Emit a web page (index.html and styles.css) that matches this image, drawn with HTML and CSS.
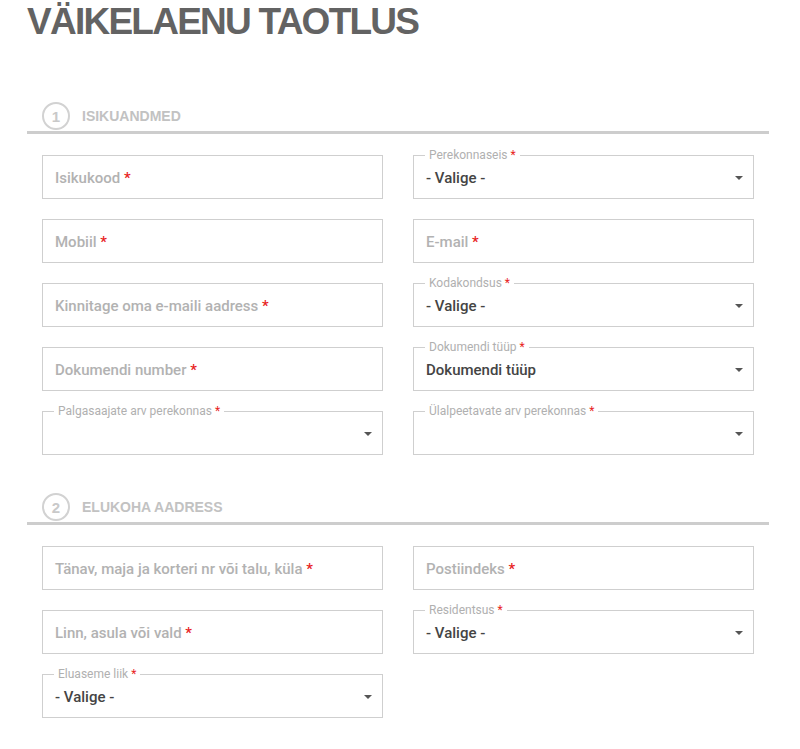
FILE: index.html
```html
<!DOCTYPE html>
<html lang="et">
<head>
    <meta charset="UTF-8">
    <meta name="viewport" content="width=device-width, initial-scale=1.0">
    <title>Väikelaenu taotlus</title>
    <link rel="stylesheet" href="styles.css">
</head>
<body>
    <div class="page">
        <h1 class="title">VÄIKELAENU TAOTLUS</h1>

        <!-- Step 1: personal data -->
        <section class="step">
            <div class="step-head">
                <span class="step-num">1</span>
                <span class="step-name">ISIKUANDMED</span>
            </div>
            <div class="fields">
                <div class="field"><span class="placeholder">Isikukood <span class="req">*</span></span></div>
                <div class="field select">
                    <span class="label">Perekonnaseis <span class="req">*</span></span>
                    <span class="value">- Valige -</span><span class="caret"></span>
                </div>
                <div class="field"><span class="placeholder">Mobiil <span class="req">*</span></span></div>
                <div class="field"><span class="placeholder">E-mail <span class="req">*</span></span></div>
                <div class="field"><span class="placeholder">Kinnitage oma e-maili aadress <span class="req">*</span></span></div>
                <div class="field select">
                    <span class="label">Kodakondsus <span class="req">*</span></span>
                    <span class="value">- Valige -</span><span class="caret"></span>
                </div>
                <div class="field"><span class="placeholder">Dokumendi number <span class="req">*</span></span></div>
                <div class="field select">
                    <span class="label">Dokumendi tüüp <span class="req">*</span></span>
                    <span class="value">Dokumendi tüüp</span><span class="caret"></span>
                </div>
                <div class="field select">
                    <span class="label">Palgasaajate arv perekonnas <span class="req">*</span></span>
                    <span class="value"></span><span class="caret"></span>
                </div>
                <div class="field select">
                    <span class="label">Ülalpeetavate arv perekonnas <span class="req">*</span></span>
                    <span class="value"></span><span class="caret"></span>
                </div>
            </div>
        </section>

        <!-- Step 2: address -->
        <section class="step">
            <div class="step-head">
                <span class="step-num">2</span>
                <span class="step-name">ELUKOHA AADRESS</span>
            </div>
            <div class="fields">
                <div class="field"><span class="placeholder">Tänav, maja ja korteri nr või talu, küla <span class="req">*</span></span></div>
                <div class="field"><span class="placeholder">Postiindeks <span class="req">*</span></span></div>
                <div class="field"><span class="placeholder">Linn, asula või vald <span class="req">*</span></span></div>
                <div class="field select">
                    <span class="label">Residentsus <span class="req">*</span></span>
                    <span class="value">- Valige -</span><span class="caret"></span>
                </div>
                <div class="field select">
                    <span class="label">Eluaseme liik <span class="req">*</span></span>
                    <span class="value">- Valige -</span><span class="caret"></span>
                </div>
            </div>
        </section>
    </div>
</body>
</html>
```

FILE: styles.css
```css
/* Loan application form */
body {
    margin: 0;
    background: #fff;
    font-family: Roboto, "Liberation Sans", Arial, sans-serif;
}

.page {
    width: 742px;
    padding-left: 27px;
}

.title {
    margin: 0;
    height: 44px;
    line-height: 44px;
    font-family: "Liberation Sans", Arial, sans-serif;
    font-size: 37px;
    font-weight: bold;
    letter-spacing: -1.75px;
    color: #636363;
}

.step {
    margin-top: 58px;
}

.step + .step {
    margin-top: 38px;
}

/* Numbered step heading with grey rule */
.step-head {
    display: flex;
    align-items: center;
    padding: 0 15px 1px;
    border-bottom: 3px solid #cdcdcd;
}

.step-num {
    width: 24px;
    height: 24px;
    border: 2px solid #d2d2d2;
    border-radius: 50%;
    display: flex;
    align-items: center;
    justify-content: center;
    font-family: "Liberation Sans", Arial, sans-serif;
    font-size: 15px;
    font-weight: bold;
    color: #c9c9c9;
}

.step-name {
    margin-left: 12px;
    font-family: "Liberation Sans", Arial, sans-serif;
    font-size: 14px;
    font-weight: bold;
    color: #c2c2c2;
}

.fields {
    display: grid;
    grid-template-columns: 1fr 1fr;
    column-gap: 30px;
    row-gap: 20px;
    padding: 21px 15px 0;
}

.field {
    position: relative;
    height: 44px;
    box-sizing: border-box;
    border: 1px solid #cfcfcf;
    display: flex;
    align-items: center;
    padding: 2px 10px 0 12px;
}

.placeholder {
    font-size: 15px;
    font-weight: 500;
    color: #b2b2b2;
}

.req {
    color: #e8231e;
}

/* Select boxes carry their label on the top border */
.label {
    position: absolute;
    top: -8px;
    left: 11px;
    padding: 0 4px;
    background: #fff;
    font-size: 12px;
    line-height: 14px;
    color: #b0b0b0;
}

.value {
    flex: 1;
    font-size: 15px;
    font-weight: 500;
    color: #444;
}

.caret {
    width: 0;
    height: 0;
    border-left: 4px solid transparent;
    border-right: 4px solid transparent;
    border-top: 4px solid #555;
}
```
